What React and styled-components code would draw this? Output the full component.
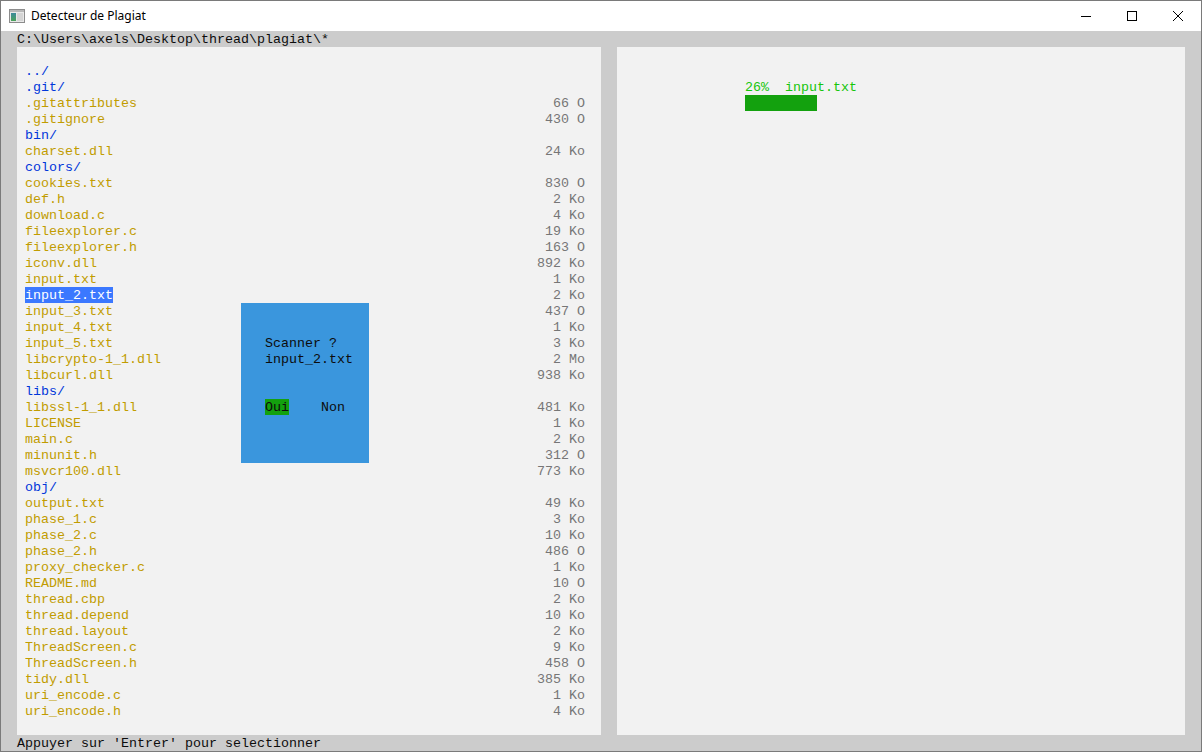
import React from "react";
import styled, { createGlobalStyle } from "styled-components";

const Global = createGlobalStyle`
  html, body { margin: 0; padding: 0; background: #ffffff; }
  body { width: 1202px; height: 752px; overflow: hidden; }
`;

const Window = styled.div`
  width: 1200px;
  height: 750px;
  border: 1px solid #7a7a7a;
  display: flex;
  flex-direction: column;
  background: #ffffff;
`;

const TitleBar = styled.div`
  height: 30px;
  display: flex;
  align-items: center;
  background: #ffffff;
  font-family: "Noto Sans", "Open Sans", sans-serif;
  font-size: 12px;
  color: #000000;
`;

const AppIcon = styled.svg`
  margin-left: 8px;
  margin-right: 6px;
  flex: none;
`;

const Title = styled.span`
  flex: 1;
  line-height: 30px;
  padding-bottom: 1px;
`;

const CtrlButton = styled.div`
  width: 46px;
  height: 30px;
  display: flex;
  align-items: center;
  justify-content: center;
`;

const Console = styled.div`
  flex: 1;
  background: #cccccc;
  display: flex;
  flex-direction: column;
  font-family: "Liberation Mono", "DejaVu Sans Mono", monospace;
  font-size: 13.333px;
  line-height: 18px;
  color: #0c0c0c;
  white-space: pre;
`;

const Line = styled.div`
  height: 16px;
  padding-left: 16px;
`;

const Panels = styled.div`
  height: 688px;
  display: flex;
  gap: 16px;
  padding-left: 16px;
`;

const Panel = styled.div`
  position: relative;
  width: ${(p) => p.$w}px;
  background: #f2f2f2;
  padding: ${(p) => p.$pt}px 0 0 ${(p) => p.$pl}px;
  box-sizing: border-box;
`;

const Row = styled.div`
  width: 560px;
  height: 16px;
  display: flex;
  align-items: flex-start;
  justify-content: space-between;
`;

const Name = styled.span`
  display: block;
  height: 16px;
  color: ${(p) => (p.$sel ? "#ffffff" : p.$dir ? "#0037da" : "#c19c00")};
  background: ${(p) => (p.$sel ? "#3b78ff" : "transparent")};
`;

const Size = styled.span`
  color: #767676;
`;

const Dialog = styled.div`
  position: absolute;
  left: 224px;
  top: 256px;
  width: 128px;
  height: 160px;
  background: #3a96dd;
  box-sizing: border-box;
  padding: 32px 0 0 24px;
  color: #0c0c0c;
`;

const DialogLine = styled.div`
  height: 16px;
`;

const Spacer = styled.div`
  height: ${(p) => p.$h}px;
`;

const Choices = styled.div`
  display: flex;
  height: 16px;
  gap: 32px;
`;

const Choice = styled.span`
  display: block;
  height: 16px;
  background: ${(p) => (p.$on ? "#13a10e" : "transparent")};
`;

const Progress = styled.div`
  color: #16c60c;
  height: 16px;
`;

const Bar = styled.div`
  height: 16px;
  background: #13a10e;
`;

const files = [
  ["../", null, true],
  [".git/", null, true],
  [".gitattributes", "66 O"],
  [".gitignore", "430 O"],
  ["bin/", null, true],
  ["charset.dll", "24 Ko"],
  ["colors/", null, true],
  ["cookies.txt", "830 O"],
  ["def.h", "2 Ko"],
  ["download.c", "4 Ko"],
  ["fileexplorer.c", "19 Ko"],
  ["fileexplorer.h", "163 O"],
  ["iconv.dll", "892 Ko"],
  ["input.txt", "1 Ko"],
  ["input_2.txt", "2 Ko", false, true],
  ["input_3.txt", "437 O"],
  ["input_4.txt", "1 Ko"],
  ["input_5.txt", "3 Ko"],
  ["libcrypto-1_1.dll", "2 Mo"],
  ["libcurl.dll", "938 Ko"],
  ["libs/", null, true],
  ["libssl-1_1.dll", "481 Ko"],
  ["LICENSE", "1 Ko"],
  ["main.c", "2 Ko"],
  ["minunit.h", "312 O"],
  ["msvcr100.dll", "773 Ko"],
  ["obj/", null, true],
  ["output.txt", "49 Ko"],
  ["phase_1.c", "3 Ko"],
  ["phase_2.c", "10 Ko"],
  ["phase_2.h", "486 O"],
  ["proxy_checker.c", "1 Ko"],
  ["README.md", "10 O"],
  ["thread.cbp", "2 Ko"],
  ["thread.depend", "10 Ko"],
  ["thread.layout", "2 Ko"],
  ["ThreadScreen.c", "9 Ko"],
  ["ThreadScreen.h", "458 O"],
  ["tidy.dll", "385 Ko"],
  ["uri_encode.c", "1 Ko"],
  ["uri_encode.h", "4 Ko"],
];

export default function App() {
  const progress = 26;
  return (
    <>
      <Global />
      <Window>
        <TitleBar>
          <AppIcon width="16" height="14" viewBox="0 0 16 14">
            <defs>
              <linearGradient id="g" x1="0" y1="0" x2="0" y2="1">
                <stop offset="0" stopColor="#3d8a9c" />
                <stop offset="1" stopColor="#4aa35a" />
              </linearGradient>
            </defs>
            <rect x="0.5" y="0.5" width="15" height="13" fill="#e8e8e8" stroke="#8c8c8c" />
            <rect x="1" y="1" width="14" height="2" fill="#b8b8b8" />
            <rect x="2" y="4" width="5" height="8" fill="url(#g)" />
            <rect x="8" y="4" width="6" height="8" fill="#d4d4d4" />
          </AppIcon>
          <Title>Detecteur de Plagiat</Title>
          <CtrlButton>
            <svg width="10" height="10" viewBox="0 0 10 10">
              <path d="M0 5.5h10" stroke="#000" strokeWidth="1" />
            </svg>
          </CtrlButton>
          <CtrlButton>
            <svg width="10" height="10" viewBox="0 0 10 10">
              <rect x="0.5" y="0.5" width="9" height="9" fill="none" stroke="#000" strokeWidth="1" />
            </svg>
          </CtrlButton>
          <CtrlButton>
            <svg width="10" height="10" viewBox="0 0 10 10">
              <path d="M0 0L10 10M10 0L0 10" stroke="#000" strokeWidth="1" />
            </svg>
          </CtrlButton>
        </TitleBar>
        <Console>
          <Line>{"C:\\Users\\axels\\Desktop\\thread\\plagiat\\*"}</Line>
          <Panels>
            <Panel $w={584} $pt={16} $pl={8}>
              {files.map(([name, size, dir, sel]) => (
                <Row key={name}>
                  <Name $dir={dir} $sel={sel}>{name}</Name>
                  {size && <Size>{size}</Size>}
                </Row>
              ))}
              <Dialog>
                <DialogLine>Scanner ?</DialogLine>
                <DialogLine>input_2.txt</DialogLine>
                <Spacer $h={32} />
                <Choices>
                  <Choice $on>Oui</Choice>
                  <Choice>Non</Choice>
                </Choices>
              </Dialog>
            </Panel>
            <Panel $w={568} $pt={32} $pl={128}>
              <Progress>{`${progress}%  input.txt`}</Progress>
              <Bar style={{ width: `${Math.round((progress / 100) * 35) * 8}px` }} />
            </Panel>
          </Panels>
          <Line>Appuyer sur 'Entrer' pour selectionner</Line>
        </Console>
      </Window>
    </>
  );
}
